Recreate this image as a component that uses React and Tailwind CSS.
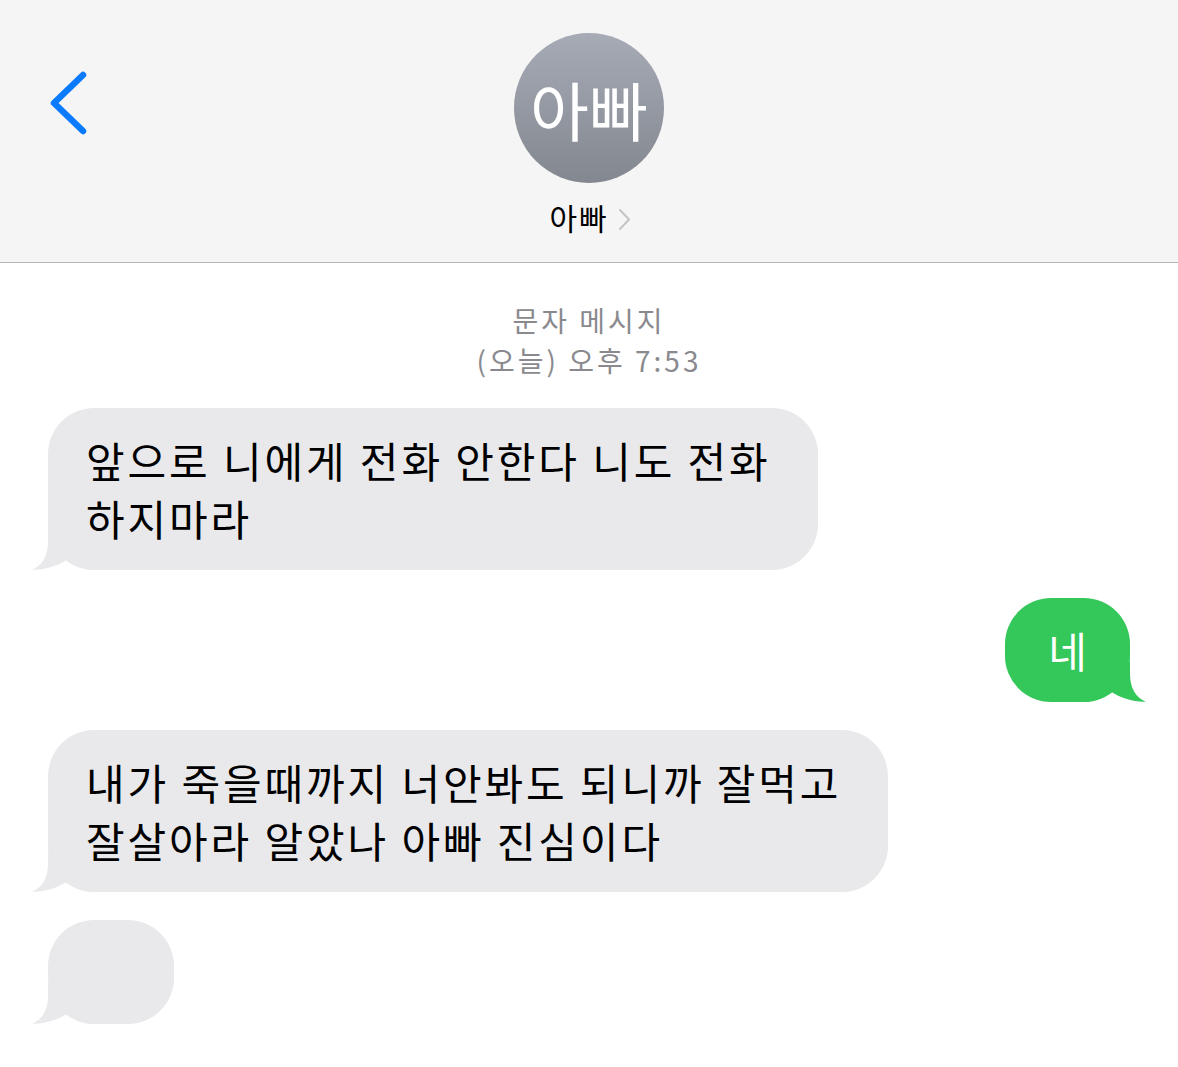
import React from 'react';

const FONT = { fontFamily: '"Noto Sans CJK KR", "Noto Sans", sans-serif' };

const TailLeft = ({ color }) => (
  <svg
    className="absolute bottom-0 left-[-16px]"
    width="60"
    height="40"
    viewBox="0 0 60 40"
  >
    <path
      d="M16 0 L16 12 C16 26 10 36 0 39.6 C12 40.2 26 36 36 29 C42 35 50 39 60 40 L60 0 Z"
      fill={color}
    />
  </svg>
);

const TailRight = ({ color }) => (
  <svg
    className="absolute bottom-0 right-[-16px] -scale-x-100"
    width="60"
    height="40"
    viewBox="0 0 60 40"
  >
    <path
      d="M16 0 L16 12 C16 26 10 36 0 39.6 C12 40.2 26 36 36 29 C42 35 50 39 60 40 L60 0 Z"
      fill={color}
    />
  </svg>
);

const IncomingBubble = ({ width, lines }) => (
  <div className="flex justify-start">
    <div
      className={`relative rounded-[46px] bg-[#e9e9eb] py-[23px] pl-[38px] text-[42px] leading-[58px] tracking-[2.9px] text-black whitespace-nowrap ${width}`}
    >
      {lines.length === 0 ? (
        <div className="h-[58px]" />
      ) : (
        lines.map((line, i) => <div key={i}>{line}</div>)
      )}
      <TailLeft color="#e9e9eb" />
    </div>
  </div>
);

const OutgoingBubble = ({ text }) => (
  <div className="flex justify-end">
    <div className="relative flex h-[104px] w-[125px] items-center justify-center rounded-[46px] bg-[#34c759] text-[42px] leading-[58px] text-white">
      <span>{text}</span>
      <TailRight color="#34c759" />
    </div>
  </div>
);

export default function App() {
  return (
    <div className="min-h-[1067px] w-full bg-white" style={FONT}>
      {/* header */}
      <div className="relative flex h-[263px] flex-col items-center border-b border-[#b6b6b8] bg-[#f5f5f5]">
        <button className="absolute left-[48px] top-[70px] p-0">
          <svg width="44" height="66" viewBox="0 0 44 66">
            <path
              d="M35 5 L6 33 L35 61"
              fill="none"
              stroke="#0a7aff"
              strokeWidth="6.5"
              strokeLinecap="round"
              strokeLinejoin="round"
            />
          </svg>
        </button>

        <div className="mt-[33px] flex h-[150px] w-[150px] items-center justify-center rounded-full bg-gradient-to-b from-[#a6abb6] to-[#83878f]">
          <span className="text-[64px] leading-none text-white">아빠</span>
        </div>

        <div className="mt-[16px] flex items-center gap-[9px] pl-[2px]">
          <span className="text-[30px] leading-[36px] tracking-[2px] text-black">아빠</span>
          <svg width="13" height="23" viewBox="0 0 13 23" className="mt-[4px]">
            <path
              d="M2 2 L11 11.5 L2 21"
              fill="none"
              stroke="#c4c4c7"
              strokeWidth="2"
              strokeLinecap="round"
              strokeLinejoin="round"
            />
          </svg>
        </div>
      </div>

      {/* timestamp */}
      <div className="mt-[37px] flex flex-col items-center text-[28px] leading-[40px] tracking-[3px] text-[#8a8a8e]">
        <span>문자 메시지</span>
        <span>(오늘) 오후 7:53</span>
      </div>

      {/* messages */}
      <div className="mt-[28px] flex flex-col gap-[28px] px-[48px] pb-[40px]">
        <IncomingBubble
          width="w-[770px]"
          lines={['앞으로 니에게 전화 안한다 니도 전화', '하지마라']}
        />
        <OutgoingBubble text="네" />
        <IncomingBubble
          width="w-[840px]"
          lines={['내가 죽을때까지 너안봐도 되니까 잘먹고', '잘살아라 알았나 아빠 진심이다']}
        />
        <IncomingBubble width="w-[126px]" lines={[]} />
      </div>
    </div>
  );
}
